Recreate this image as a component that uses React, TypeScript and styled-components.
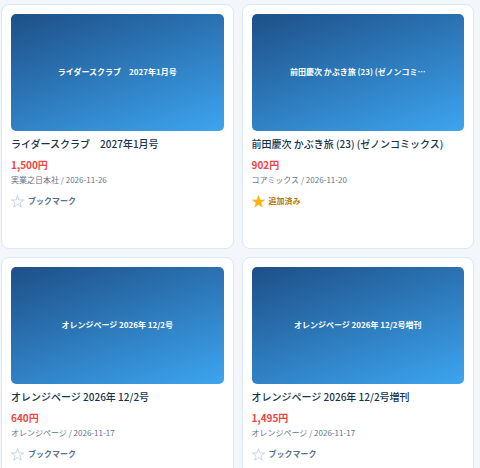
import { useState } from 'react';
import styled, { createGlobalStyle } from 'styled-components';

type Book = {
  id: number;
  title: string;
  price: string;
  publisher: string;
  date: string;
  bookmarked?: boolean;
};

const books: Book[] = [
  { id: 1, title: 'ライダースクラブ　2027年1月号', price: '1,500円', publisher: '実業之日本社', date: '2026-11-26' },
  {
    id: 2,
    title: '前田慶次 かぶき旅 (23) (ゼノンコミックス)',
    price: '902円',
    publisher: 'コアミックス',
    date: '2026-11-20',
    bookmarked: true,
  },
  { id: 3, title: 'オレンジページ 2026年 12/2号', price: '640円', publisher: 'オレンジページ', date: '2026-11-17' },
  { id: 4, title: 'オレンジページ 2026年 12/2号増刊', price: '1,495円', publisher: 'オレンジページ', date: '2026-11-17' },
];

const COVER_LIMIT = 21;

const coverTitle = (title: string) =>
  title.length > COVER_LIMIT ? `${title.slice(0, COVER_LIMIT)}…` : title;

const BookCard = ({ book }: { book: Book }) => {
  const [active, setActive] = useState(Boolean(book.bookmarked));

  return (
    <StyledCard>
      <StyledCover>{coverTitle(book.title)}</StyledCover>
      <StyledTitle>{book.title}</StyledTitle>
      <StyledPrice>{book.price}</StyledPrice>
      <StyledMeta>
        {book.publisher} / {book.date}
      </StyledMeta>
      <StyledBookmark type="button" $active={active} aria-pressed={active} onClick={() => setActive(!active)}>
        <StyledStar viewBox="1 1 22 22" $active={active} aria-hidden="true">
          <path d="M12 2l2.500 7.400h7.800l-6.300 4.700 2.400 7.500-6.400-4.600-6.400 4.600L8 14.100 1.700 9.400h7.800z" />
        </StyledStar>
        {active ? '追加済み' : 'ブックマーク'}
      </StyledBookmark>
    </StyledCard>
  );
};

export default function App() {
  return (
    <>
      <GlobalStyle />
      <StyledGrid>
        {books.map((book) => (
          <BookCard key={book.id} book={book} />
        ))}
      </StyledGrid>
    </>
  );
}

const GlobalStyle = createGlobalStyle`
  * {
    box-sizing: border-box;
  }

  body {
    margin: 0;
    background: #f3f7fc;
    color: #17324d;
    font-family: 'Noto Sans CJK JP', sans-serif;
  }
`;

const StyledGrid = styled.main`
  display: grid;
  grid-template-columns: repeat(2, minmax(0, 1fr));
  gap: 8px;
  padding: 4px 6px 4px 1px;
`;

const StyledCard = styled.article`
  display: flex;
  flex-direction: column;
  align-items: flex-start;
  min-height: 245px;
  padding: 9px;
  background: #ffffff;
  border: 1px solid #dce8f3;
  border-radius: 8px;
`;

const StyledCover = styled.div`
  display: flex;
  align-items: center;
  justify-content: center;
  width: 100%;
  height: 117px;
  padding: 0 8px 2px;
  background: linear-gradient(160deg, #1e4f87, #3da5ef);
  border-radius: 5px;
  color: #ffffff;
  font-size: 8px;
  font-weight: 700;
  line-height: 12px;
  text-align: center;
`;

const StyledTitle = styled.h2`
  margin: 5px 0 0;
  font-size: 10px;
  font-weight: 500;
  line-height: 16px;
`;

const StyledPrice = styled.p`
  margin: 6px 0 0;
  color: #f04444;
  font-size: 10px;
  font-weight: 700;
  line-height: 14px;
`;

const StyledMeta = styled.p`
  margin: 2px 0 0;
  color: #64748b;
  font-size: 8px;
  font-weight: 400;
  line-height: 12px;
`;

const StyledBookmark = styled.button<{ $active: boolean }>`
  display: inline-flex;
  align-items: center;
  gap: 4px;
  margin-top: 8px;
  padding: 0;
  background: none;
  border: 0;
  color: ${({ $active }) => ($active ? '#b7790b' : '#5a708a')};
  font-family: inherit;
  font-size: 8px;
  font-weight: 700;
  line-height: 14px;
  cursor: pointer;
`;

const StyledStar = styled.svg<{ $active: boolean }>`
  width: 13px;
  height: 13px;
  fill: ${({ $active }) => ($active ? '#fbb312' : 'none')};
  stroke: ${({ $active }) => ($active ? '#fbb312' : '#a9bacd')};
  stroke-width: 1;
`;
